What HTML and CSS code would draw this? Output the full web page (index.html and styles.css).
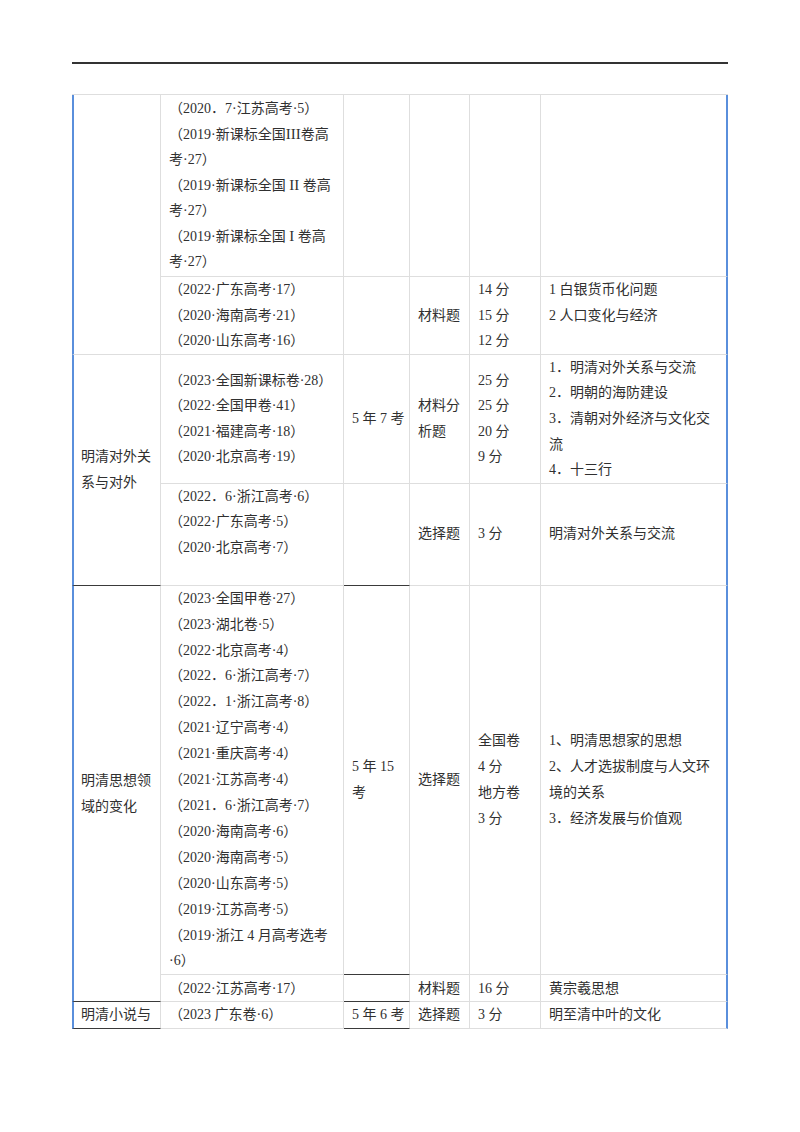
FILE: index.html
```html
<!DOCTYPE html>
<html lang="zh-CN">
<head>
<meta charset="utf-8">
<title>明清考点分布</title>
<link rel="stylesheet" href="styles.css">
</head>
<body>
<div class="page">
  <div class="header-rule"></div>
  <table class="grid">
    <colgroup>
      <col class="w1"><col class="w2"><col class="w3"><col class="w4"><col class="w5"><col class="w6">
    </colgroup>
    <tbody>
      <tr class="r-a">
        <td class="c1" rowspan="2"></td>
        <td class="c2">（2020．7·江苏高考·5）<br>（2019·新课标全国<span class="rn">III</span>卷高<br>考·27）<br>（2019·新课标全国 <span class="rn">II</span> 卷高<br>考·27）<br>（2019·新课标全国 <span class="rn">I</span> 卷高<br>考·27）</td>
        <td class="c3"></td>
        <td class="c4"></td>
        <td class="c5"></td>
        <td class="c6"></td>
      </tr>
      <tr class="r-b">
        <td class="c2">（2022·广东高考·17）<br>（2020·海南高考·21）<br>（2020·山东高考·16）</td>
        <td class="c3"></td>
        <td class="c4">材料题</td>
        <td class="c5">14 分<br>15 分<br>12 分</td>
        <td class="c6 top">1 白银货币化问题<br>2 人口变化与经济</td>
      </tr>
      <tr class="r-c">
        <td class="c1 dark" rowspan="2">明清对外关<br>系与对外</td>
        <td class="c2">（2023·全国新课标卷·28）<br>（2022·全国甲卷·41）<br>（2021·福建高考·18）<br>（2020·北京高考·19）</td>
        <td class="c3">5 年 7 考</td>
        <td class="c4">材料分<br>析题</td>
        <td class="c5">25 分<br>25 分<br>20 分<br>9 分</td>
        <td class="c6">1．明清对外关系与交流<br>2．明朝的海防建设<br>3．清朝对外经济与文化交<br>流<br>4．十三行</td>
      </tr>
      <tr class="r-d">
        <td class="c2 top">（2022．6·浙江高考·6）<br>（2022·广东高考·5）<br>（2020·北京高考·7）</td>
        <td class="c3 dark"></td>
        <td class="c4">选择题</td>
        <td class="c5">3 分</td>
        <td class="c6">明清对外关系与交流</td>
      </tr>
      <tr class="r-e">
        <td class="c1 dark" rowspan="2">明清思想领<br>域的变化</td>
        <td class="c2">（2023·全国甲卷·27）<br>（2023·湖北卷·5）<br>（2022·北京高考·4）<br>（2022．6·浙江高考·7）<br>（2022．1·浙江高考·8）<br>（2021·辽宁高考·4）<br>（2021·重庆高考·4）<br>（2021·江苏高考·4）<br>（2021．6·浙江高考·7）<br>（2020·海南高考·6）<br>（2020·海南高考·5）<br>（2020·山东高考·5）<br>（2019·江苏高考·5）<br>（2019·浙江 4 月高考选考<br>·6）</td>
        <td class="c3 dark">5 年 15<br>考</td>
        <td class="c4">选择题</td>
        <td class="c5">全国卷<br>4 分<br>地方卷<br>3 分</td>
        <td class="c6">1、明清思想家的思想<br>2、人才选拔制度与人文环<br>境的关系<br>3．经济发展与价值观</td>
      </tr>
      <tr class="r-f">
        <td class="c2">（2022·江苏高考·17）</td>
        <td class="c3 dark"></td>
        <td class="c4">材料题</td>
        <td class="c5">16 分</td>
        <td class="c6">黄宗羲思想</td>
      </tr>
      <tr class="r-g">
        <td class="c1 dark">明清小说与</td>
        <td class="c2">（2023 广东卷·6）</td>
        <td class="c3 dark">5 年 6 考</td>
        <td class="c4">选择题</td>
        <td class="c5">3 分</td>
        <td class="c6">明至清中叶的文化</td>
      </tr>
    </tbody>
  </table>
</div>
</body>
</html>
```

FILE: styles.css
```css
html, body {
  margin: 0;
  padding: 0;
  background: #ffffff;
}

body {
  font-family: "Liberation Serif", "Noto Sans CJK SC", serif;
  font-size: 14px;
  color: #303030;
}

.page {
  width: 656px;
  padding: 62px 0 0 72px;
}

.header-rule {
  height: 0;
  border-top: 2px solid #333333;
  margin-bottom: 30px;
}

.grid {
  width: 656px;
  table-layout: fixed;
  border-collapse: separate;
  border-spacing: 0;
  border-top: 1px solid #dedede;
}

.w1 { width: 89px; }
.w2 { width: 183px; }
.w3 { width: 66px; }
.w4 { width: 60px; }
.w5 { width: 71px; }
.w6 { width: 187px; }

.grid td {
  padding: 0 8px;
  line-height: 25.6px;
  vertical-align: middle;
  white-space: nowrap;
  overflow: visible;
  border-right: 1px solid #dedede;
  border-bottom: 1px solid #dedede;
  text-align: left;
}

.grid td.c1 {
  border-left: 2px solid #5a8fdc;
  padding-left: 7px;
}

.grid td.c6 {
  border-right: 2px solid #5a8fdc;
}

.grid td.top {
  vertical-align: top;
}

.grid td.dark {
  border-bottom-color: #3a3a3a;
}

.rn {
  font-family: "Liberation Serif", serif;
  font-size: 15px;
}

.r-a { height: 182px; }
.r-b { height: 77px; }
.r-d { height: 102px; }
.r-e td { line-height: 25.9px; }
.r-e { height: 389px; }
.r-f { height: 27px; }
.r-g { height: 26px; }
```
